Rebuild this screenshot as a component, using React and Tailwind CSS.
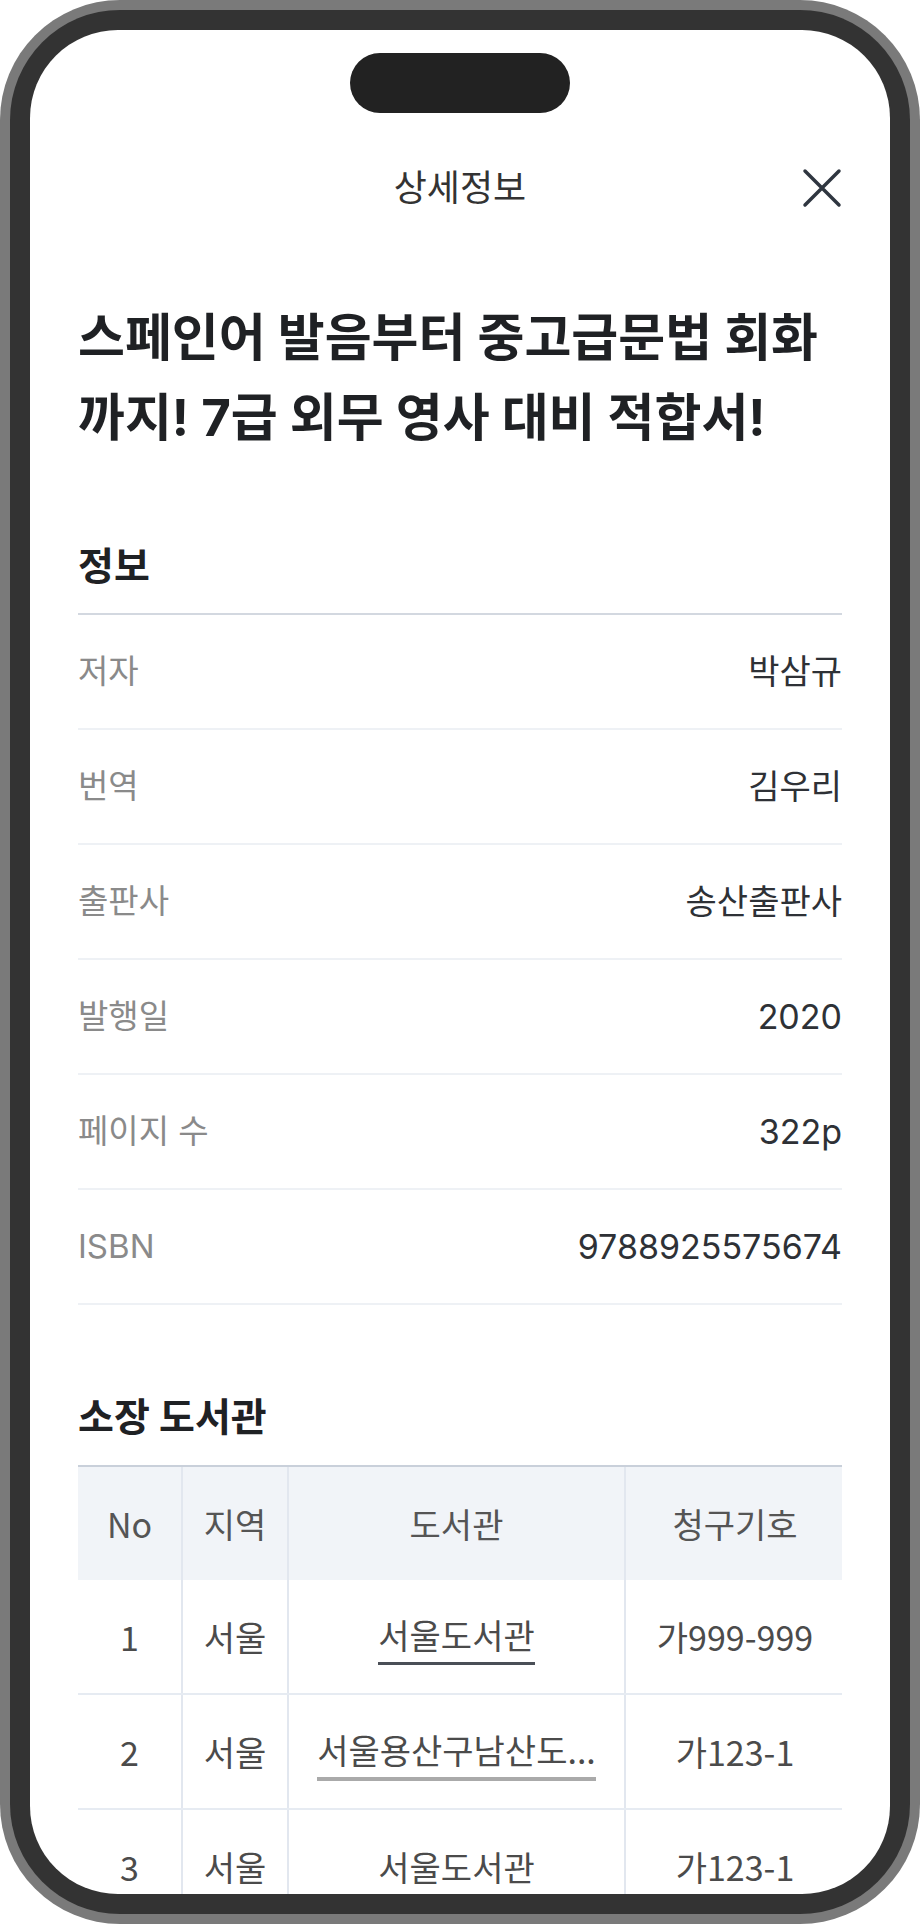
export default function App() {
  const info = [
    ['저자', '박삼규'],
    ['번역', '김우리'],
    ['출판사', '송산출판사'],
    ['발행일', '2020'],
    ['페이지 수', '322p'],
    ['ISBN', '9788925575674'],
  ];
  const rows = [
    ['1', '서울', '서울도서관', '가999-999', 'dark'],
    ['2', '서울', '서울용산구남산도...', '가123-1', 'light'],
    ['3', '서울', '서울도서관', '가123-1', 'none'],
  ];
  return (
    <div className="w-[920px] h-[1924px] bg-white font-['Inter','Noto_Sans_CJK_KR',sans-serif]">
      <div className="h-full rounded-[120px] bg-[#7a7a7a] p-[10px]">
        <div className="h-full rounded-[110px] bg-[#333333] p-[20px]">
          <div className="h-full rounded-[88px] bg-white overflow-hidden flex flex-col">
            <div className="flex justify-center pt-[23px]">
              <div className="w-[220px] h-[60px] rounded-full bg-[#222222]" />
            </div>
            <div className="px-[48px]">
              <div className="mt-[27px] h-[96px] flex items-center justify-between">
                <div className="w-[40px]" />
                <div className="text-[36px] text-[#333333] leading-none">상세정보</div>
                <svg width="40" height="40" viewBox="0 0 40 40" className="text-[#2f3640]">
                  <path d="M3 3 L37 37 M37 3 L3 37" stroke="currentColor" strokeWidth="3.5" strokeLinecap="round" fill="none" />
                </svg>
              </div>
              <h1 className="mt-[62px] text-[51px] font-bold leading-[80px] text-[#1f2124]">
                스페인어 발음부터 중고급문법 회화<br />까지! 7급 외무 영사 대비 적합서!
              </h1>
              <h2 className="mt-[84px] text-[39px] font-bold leading-[48px] text-[#1f2124] pb-[23px] border-b-2 border-[#d3d8e0]">
                정보
              </h2>
              {info.map(([k, v]) => (
                <div key={k} className="h-[115px] border-b-2 border-[#eef1f5] flex items-center justify-between">
                  <span className="text-[33px] text-[#8a8a8a]">{k}</span>
                  <span className="text-[34px] text-[#2e3136]">{v}</span>
                </div>
              ))}
              <h2 className="mt-[88px] mb-[24px] text-[39px] font-bold leading-[48px] text-[#1f2124]">소장 도서관</h2>
              <div className="border-t-2 border-[#c9d0da] font-['Noto_Sans_CJK_KR',sans-serif]">
                <div className="grid grid-cols-[103px_106px_337px_220px] h-[113px] bg-[#f1f4f8] text-[34px] text-[#555555]">
                  <div className="flex items-center justify-center">No</div>
                  <div className="flex items-center justify-center border-l-2 border-[#e2e7ef]">지역</div>
                  <div className="flex items-center justify-center border-l-2 border-[#e2e7ef]">도서관</div>
                  <div className="flex items-center justify-center border-l-2 border-[#e2e7ef]">청구기호</div>
                </div>
                {rows.map(([n, r, lib, code, u]) => (
                  <div key={n} className="grid grid-cols-[103px_106px_337px_220px] h-[115px] border-b-2 border-[#e6ebf2] text-[34px] text-[#4b4b4b]">
                    <div className="flex items-center justify-center">{n}</div>
                    <div className="flex items-center justify-center border-l-2 border-[#e2e7ef]">{r}</div>
                    <div className="flex items-center justify-center border-l-2 border-[#e2e7ef]">
                      {u === 'dark' && (
                        <span className="inline-block leading-[40px] pt-[7px] pb-[7px] border-b-[3px] border-[#4a4f57]">{lib}</span>
                      )}
                      {u === 'light' && (
                        <span className="inline-block leading-[40px] pt-[7px] pb-[7px] border-b-[4px] border-[#aaaaaa]">{lib}</span>
                      )}
                      {u === 'none' && <span className="leading-[40px]">{lib}</span>}
                    </div>
                    <div className="flex items-center justify-center border-l-2 border-[#e2e7ef]">{code}</div>
                  </div>
                ))}
              </div>
            </div>
          </div>
        </div>
      </div>
    </div>
  );
}
